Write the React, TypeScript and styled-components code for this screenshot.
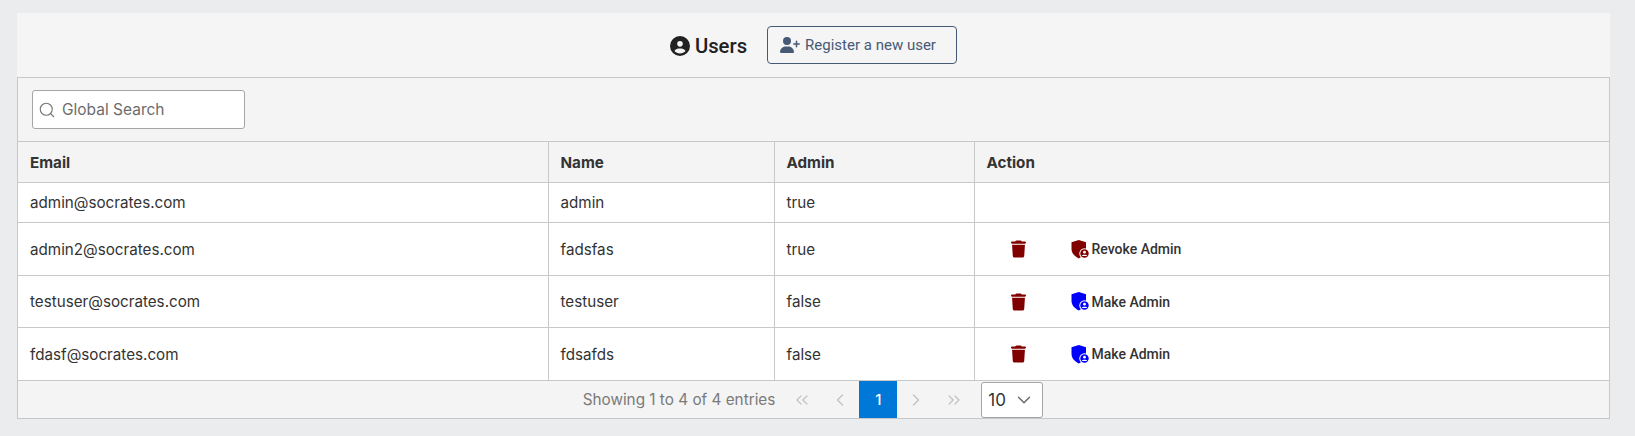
import React from "react"
import styled, { createGlobalStyle } from "styled-components"
import { FaCircleUser, FaUserPlus, FaTrash } from "react-icons/fa6"
import { FiSearch, FiChevronDown, FiChevronLeft, FiChevronRight, FiChevronsLeft, FiChevronsRight } from "react-icons/fi"

const GlobalStyle = createGlobalStyle`
    html, body {
        margin: 0;
        background: #ebecee;
        font-family: Inter, "Liberation Sans", sans-serif;
    }
`

const Page = styled.div`
    padding: 13px 25px 0 17px;
    height: 423px;
`
const Header = styled.div`
    height: 64px;
    background: #f5f5f5;
    display: flex;
    align-items: center;
    justify-content: center;
    gap: 20px;
`
const Title = styled.div`
    display: flex;
    align-items: center;
    gap: 5px;
    padding-top: 1px;
    font-family: Roboto, sans-serif;
    font-weight: 500;
    font-size: 20.3px;
    color: #212121;
`
const RegisterButton = styled.button`
    display: flex;
    align-items: center;
    gap: 5px;
    height: 38px;
    width: 190px;
    padding: 0 12px;
    background: transparent;
    border: 1px solid #475a75;
    border-radius: 4px;
    color: #475a75;
    font-family: Roboto, sans-serif;
    font-size: 15px;
`
const Frame = styled.div`
    border: 1px solid #c8c8c8;
    background: #f4f4f4;
`
const Toolbar = styled.div`
    height: 63px;
    display: flex;
    align-items: center;
    padding-left: 14px;
    padding-bottom: 1px;
    box-sizing: border-box;
`
const SearchBox = styled.div`
    width: 213px;
    height: 39px;
    box-sizing: border-box;
    display: flex;
    align-items: center;
    gap: 6px;
    padding: 1px 0 0 5px;
    background: #fff;
    border: 1px solid #a6a6a6;
    border-radius: 3px;
    color: #6c6c6c;
    font-size: 15.5px;
`
const Table = styled.table`
    width: 100%;
    table-layout: fixed;
    border-collapse: collapse;
    font-size: 15.2px;
    color: #333;
`
const HeadCell = styled.th<{ $width?: number }>`
    width: ${p => (p.$width ? p.$width + "px" : "auto")};
    height: 41px;
    padding: 0 12px;
    box-sizing: border-box;
    text-align: left;
    font-weight: 700;
    background: #f4f4f4;
    border: 1px solid #c8c8c8;
    border-left-width: 0;
    &:last-child { border-right-width: 0; }
`
const Row = styled.tr<{ $height: number }>`
    height: ${p => p.$height}px;
    background: #fff;
`
const Cell = styled.td`
    padding: 0 12px;
    border: 1px solid #c8c8c8;
    border-left-width: 0;
    &:last-child { border-right-width: 0; }
`
const Actions = styled.div`
    display: flex;
    align-items: center;
    padding-left: 24px;
`
const TrashButton = styled.span`
    display: flex;
    width: 15px;
    color: #800000;
    margin-right: 45px;
`
const AdminLabel = styled.span`
    display: flex;
    align-items: center;
    gap: 2px;
    font-family: Roboto, sans-serif;
    font-weight: 500;
    font-size: 14px;
    color: #333;
`
const Footer = styled.div`
    height: 37px;
    display: flex;
    align-items: center;
    justify-content: center;
    color: #7a7a7a;
    font-size: 15.3px;
    padding-right: 1px;
`
const Entries = styled.span`
    margin-right: 8px;
`
const PageNav = styled.span`
    width: 38px;
    height: 37px;
    display: flex;
    align-items: center;
    justify-content: center;
    color: #c0c0c0;
    font-size: 20px;
`
const CurrentPage = styled(PageNav)`
    background: #0078d7;
    color: #fff;
    font-size: 15px;
    font-weight: 500;
`
const PageSize = styled.div`
    width: 62px;
    height: 36px;
    margin-left: 8px;
    box-sizing: border-box;
    display: flex;
    align-items: center;
    justify-content: space-between;
    padding: 0 7px 0 6px;
    background: #fff;
    border: 1px solid #a6a6a6;
    border-radius: 3px;
    color: #333;
    font-size: 17px;
`

const ShieldUser = ({ color }: { color: string }) => (
    <svg width="19" height="19" viewBox="0 0 19 19">
        <path d="M7.8 0 L15 2.2 V9 C15 13.5 11.5 16.5 7.8 18.5 C4 16.5 0.5 13.5 0.5 9 V2.2 Z" fill={color} />
        <circle cx="13.5" cy="13.5" r="5.2" fill="#fff" />
        <circle cx="13.5" cy="13.5" r="4.2" fill={color} />
        <circle cx="13.5" cy="12.2" r="1.4" fill="#fff" />
        <path d="M10.8 16 C11 14.3 16 14.3 16.2 16 Z" fill="#fff" />
    </svg>
)

const users = [
    { email: "admin2@socrates.com", name: "fadsfas", admin: true, height: 53 },
    { email: "testuser@socrates.com", name: "testuser", admin: false, height: 52 },
    { email: "fdasf@socrates.com", name: "fdsafds", admin: false, height: 53 },
]

export default function App() {
    return (
        <Page>
            <GlobalStyle />
            <Header>
                <Title><FaCircleUser size={20} />Users</Title>
                <RegisterButton><FaUserPlus size={20} />Register a new user</RegisterButton>
            </Header>
            <Frame>
                <Toolbar>
                    <SearchBox><FiSearch size={18} color="#777" strokeWidth={1.5} />Global Search</SearchBox>
                </Toolbar>
                <Table>
                    <thead>
                        <tr>
                            <HeadCell $width={530}>Email</HeadCell>
                            <HeadCell $width={226}>Name</HeadCell>
                            <HeadCell $width={200}>Admin</HeadCell>
                            <HeadCell>Action</HeadCell>
                        </tr>
                    </thead>
                    <tbody>
                        <Row $height={40}>
                            <Cell>admin@socrates.com</Cell>
                            <Cell>admin</Cell>
                            <Cell>true</Cell>
                            <Cell />
                        </Row>
                        {users.map(user => (
                            <Row key={user.email} $height={user.height}>
                                <Cell>{user.email}</Cell>
                                <Cell>{user.name}</Cell>
                                <Cell>{String(user.admin)}</Cell>
                                <Cell>
                                    <Actions>
                                        <TrashButton><FaTrash size={18} /></TrashButton>
                                        <AdminLabel>
                                            <ShieldUser color={user.admin ? "#800000" : "#0000ff"} />
                                            {user.admin ? "Revoke Admin" : "Make Admin"}
                                        </AdminLabel>
                                    </Actions>
                                </Cell>
                            </Row>
                        ))}
                    </tbody>
                </Table>
                <Footer>
                    <Entries>Showing 1 to 4 of 4 entries</Entries>
                    <PageNav><FiChevronsLeft strokeWidth={1.5} /></PageNav>
                    <PageNav><FiChevronLeft strokeWidth={1.5} /></PageNav>
                    <CurrentPage>1</CurrentPage>
                    <PageNav><FiChevronRight strokeWidth={1.5} /></PageNav>
                    <PageNav><FiChevronsRight strokeWidth={1.5} /></PageNav>
                    <PageSize>10<FiChevronDown size={22} color="#666" strokeWidth={1.5} /></PageSize>
                </Footer>
            </Frame>
        </Page>
    )
}
